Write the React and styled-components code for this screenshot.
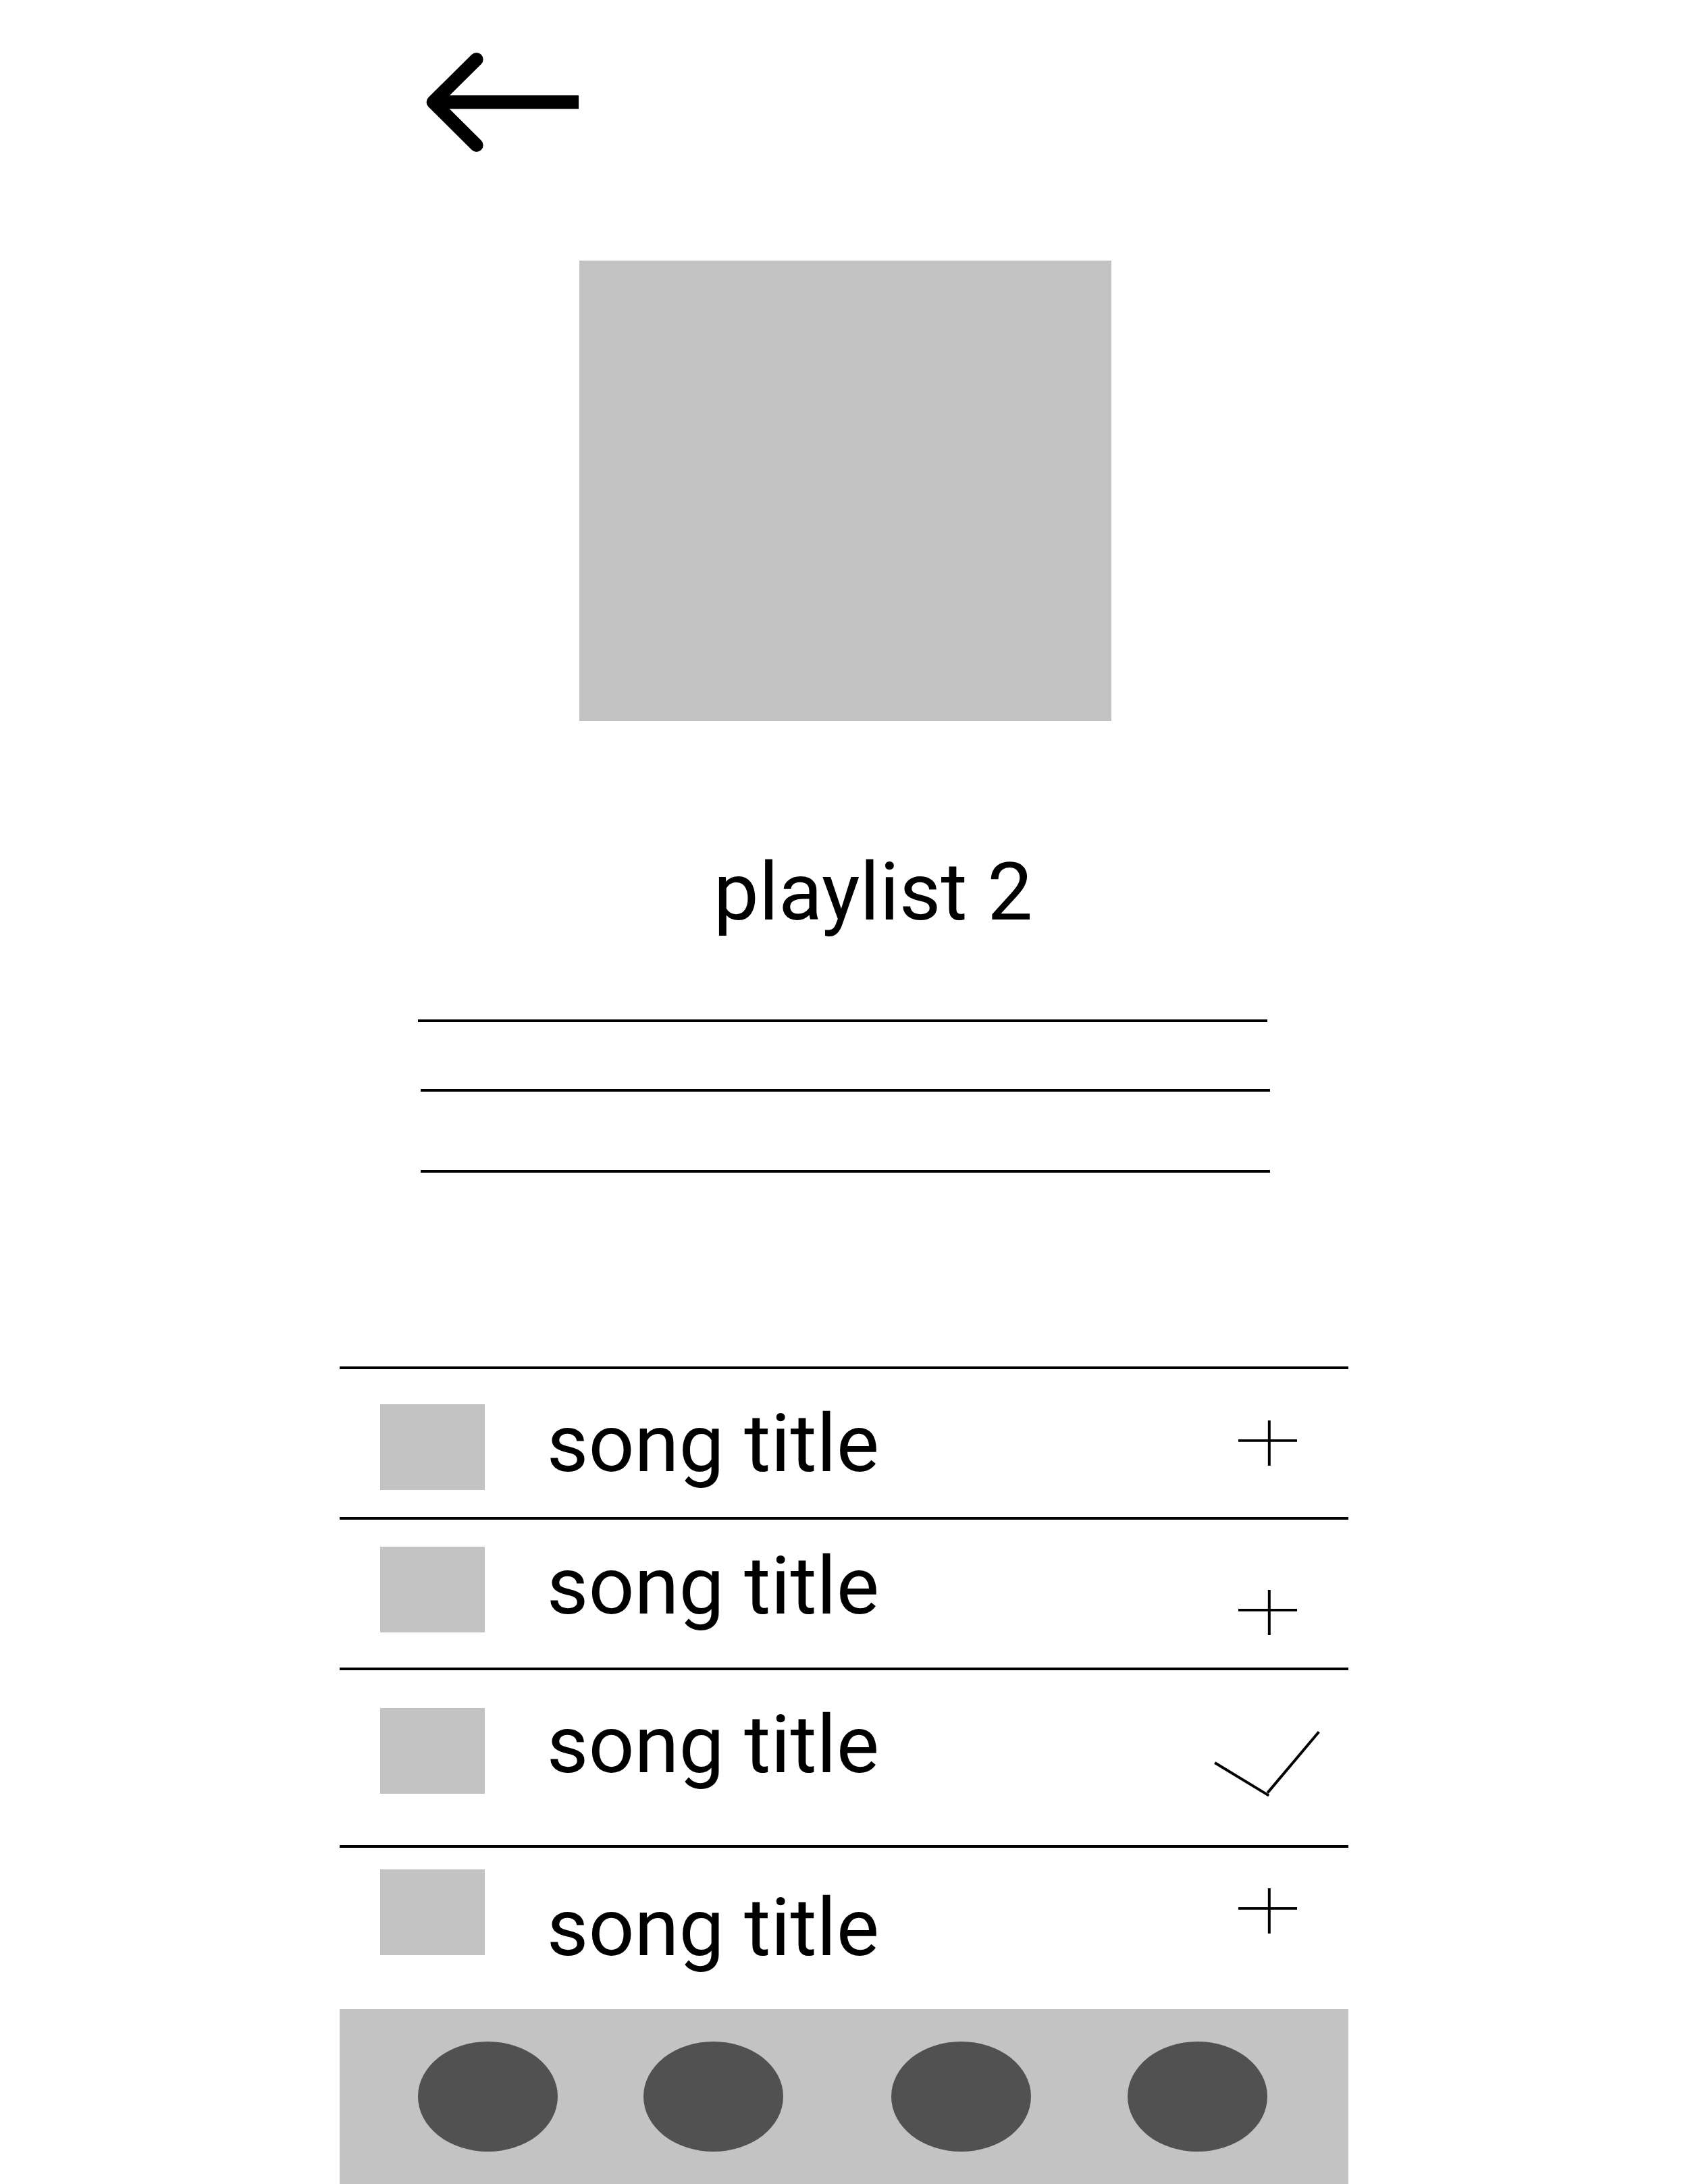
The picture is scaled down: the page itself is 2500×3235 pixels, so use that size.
import React from 'react';
import styled, { createGlobalStyle } from 'styled-components';

// the screen is drawn on a 375 x 812 grid
const u = (n) => `${n * 3.984}px`;

const GlobalStyle = createGlobalStyle`
    * {
        box-sizing: border-box;
    }

    body {
        margin: 0;
        background-color: #fff;
    }
`;

const Page = styled.div`
    display: flex;
    justify-content: center;
    height: 3235px;
    overflow: hidden;
`;

const Screen = styled.main`
    display: flex;
    flex-direction: column;
    width: ${u(375)};
    height: 100%;
    color: #000;
    font-family: Roboto, sans-serif;
    font-size: ${u(30)};
    line-height: ${u(35.5)};
`;

const Header = styled.header`
    height: ${u(97)};
    padding: ${u(19)} 0 0 ${u(32)};
`;

const BackButton = styled.button`
    display: block;
    padding: 0;
    border: none;
    background-color: transparent;
`;

const Icon = styled.svg`
    display: block;
    flex-shrink: 0;
    width: ${({ $w }) => u($w)};
    height: ${({ $h }) => u($h)};
    fill: none;
    stroke: #000;
`;

const Cover = styled.div`
    width: ${u(198)};
    height: ${u(171)};
    margin-left: ${u(89)};
    background-color: #c3c3c3;
`;

const Title = styled.h1`
    margin: ${u(46)} 0 0 ${u(139)};
    font-size: inherit;
    font-weight: 400;
    white-space: nowrap;
`;

const Description = styled.div`
    height: ${u(158.5)};
    padding: ${u(29.5)} 0 0 ${u(29)};
`;

const Line = styled.div`
    width: ${u(316)};
    height: ${u(1)};
    margin: 0 0 ${({ $gap }) => u($gap)} ${({ $indent }) => u($indent)};
    background-color: #000;
`;

const Songs = styled.ul`
    margin: 0;
    padding: 0;
    list-style: none;
`;

const Song = styled.li`
    display: flex;
    align-items: flex-start;
    height: ${({ $height }) => u($height)};
    padding: 0 ${u(9)} 0 ${u(15)};
    border-top: 4px solid #000;
`;

const Thumb = styled.div`
    width: ${u(39)};
    height: ${u(32)};
    margin-top: ${({ $top }) => u($top - 1)};
    background-color: #c3c3c3;
`;

const SongTitle = styled.span`
    flex: 1;
    margin: ${({ $top }) => u($top - 1)} 0 0 ${u(23)};
    white-space: nowrap;
`;

const Action = styled.div`
    display: flex;
    justify-content: center;
    width: ${u(42)};
    margin-top: ${({ $top }) => u($top - 1)};
`;

const NavBar = styled.nav`
    display: flex;
    flex: 1;
    align-items: flex-start;
    padding: ${u(12)} 0 0 ${u(29)};
    background-color: #c3c3c3;
`;

const NavItem = styled.div`
    width: ${u(52)};
    height: ${u(41)};
    margin-right: ${({ $gap }) => u($gap)};
    border-radius: 50%;
    background-color: #515151;
`;

const ArrowIcon = () => (
    <Icon $w={57} $h={38} viewBox='0 0 57 38' strokeWidth='5'>
        <path d='M57 18.9H4' />
        <path d='M19 3L2.9 18.9L19 34.9' strokeLinecap='round' strokeLinejoin='round' />
    </Icon>
);

const PlusIcon = () => (
    <Icon $w={22} $h={17} viewBox='0 0 22 17'>
        <path d='M0 7.5H22M11.5 0V17' />
    </Icon>
);

const CheckIcon = () => (
    <Icon $w={42} $h={26} viewBox='0 0 42 26'>
        <path d='M1.3 12.3L21.4 24.5' />
        <path d='M20.9 23.5L40 .8' />
    </Icon>
);

const lines = [
    { indent: 0, gap: 25 },
    { indent: 1, gap: 29 },
    { indent: 1, gap: 0 },
];

const songs = [
    { height: 56, thumb: 14, title: 11, action: 20 },
    { height: 56, thumb: 11, title: 8, action: 27 },
    { height: 66, thumb: 15, title: 11, action: 23, added: true },
    { height: 61, thumb: 9, title: 13, action: 16 },
];

const navGaps = [32, 40, 36, 0];

export default function App() {
    return (
        <Page>
            <GlobalStyle />
            <Screen>
                <Header>
                    <BackButton aria-label='back'>
                        <ArrowIcon />
                    </BackButton>
                </Header>
                <Cover />
                <Title>playlist 2</Title>
                <Description>
                    {lines.map((line, i) => (
                        <Line key={i} $indent={line.indent} $gap={line.gap} />
                    ))}
                </Description>
                <Songs>
                    {songs.map((song, i) => (
                        <Song key={i} $height={song.height}>
                            <Thumb $top={song.thumb} />
                            <SongTitle $top={song.title}>song title</SongTitle>
                            <Action $top={song.action}>
                                {song.added ? <CheckIcon /> : <PlusIcon />}
                            </Action>
                        </Song>
                    ))}
                </Songs>
                <NavBar>
                    {navGaps.map((gap, i) => (
                        <NavItem key={i} $gap={gap} />
                    ))}
                </NavBar>
            </Screen>
        </Page>
    );
}
